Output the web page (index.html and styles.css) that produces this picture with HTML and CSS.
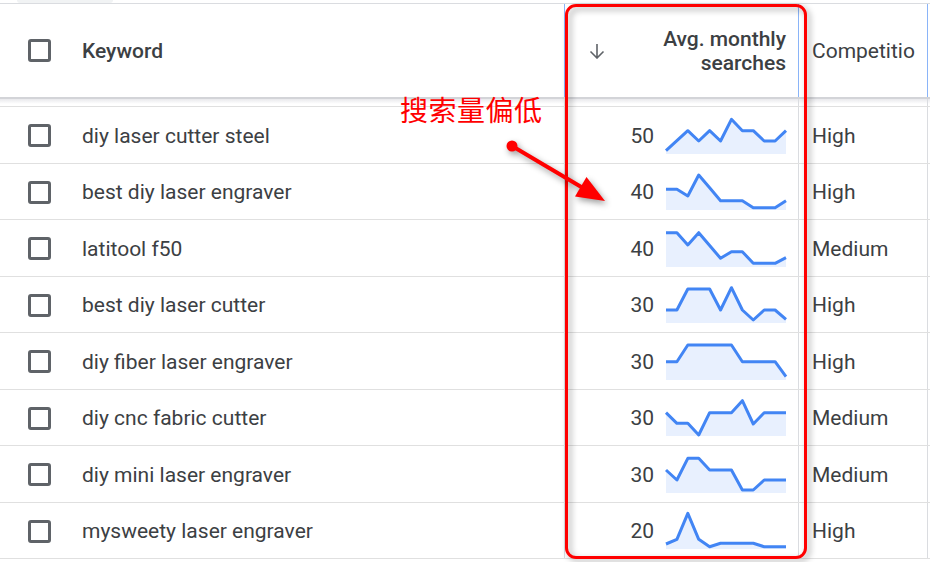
FILE: index.html
```html
<!DOCTYPE html>
<html>
<head>
<meta charset="utf-8">
<link rel="stylesheet" href="styles.css">
</head>
<body>
<div class="page">
  <div class="top-strip"><div class="tab-blob"></div></div>
  <div class="table">
    <div class="row head">
      <div class="cell kw"><span class="cb"></span><span class="hlabel">Keyword</span></div>
      <div class="cell num-h"><svg class="sort" viewBox="0 0 16 16"><path d="M8 1 V15 M1.5 8.5 L8 15 L14.5 8.5"/></svg><span class="hlabel right">Avg. monthly<br>searches</span></div>
      <div class="cell comp"><span class="comp-label">Competitio</span></div>
      <div class="cell tail"></div>
    </div>
    <div class="head-line"></div>
    <div class="row gap">
      <div class="cell"></div><div class="cell"></div><div class="cell"></div><div class="cell"></div>
    </div>

    <div class="row body">
      <div class="cell kw"><span class="cb"></span><span>diy laser cutter steel</span></div>
      <div class="cell num"><span>50</span>
        <svg class="spark" viewBox="0 0 120 36"><path class="area" d="M0,32.7 L10.91,22.7 L21.82,12.7 L32.73,23 L43.64,12.7 L54.55,23 L65.45,1.3 L76.36,12.7 L87.27,12.7 L98.18,23 L109.09,23 L120,12.7 L120,36 L0,36 Z"/><polyline class="ln" points="0,32.7 10.91,22.7 21.82,12.7 32.73,23 43.64,12.7 54.55,23 65.45,1.3 76.36,12.7 87.27,12.7 98.18,23 109.09,23 120,12.7"/></svg>
      </div>
      <div class="cell comp">High</div>
      <div class="cell tail"></div>
    </div>

    <div class="row body">
      <div class="cell kw"><span class="cb"></span><span>best diy laser engraver</span></div>
      <div class="cell num"><span>40</span>
        <svg class="spark" viewBox="0 0 120 36"><path class="area" d="M0,15.3 L10.91,15.3 L21.82,22 L32.73,1 L43.64,13.8 L54.55,26.7 L65.45,26.7 L76.36,26.7 L87.27,33.7 L98.18,33.7 L109.09,33.7 L120,26.7 L120,36 L0,36 Z"/><polyline class="ln" points="0,15.3 10.91,15.3 21.82,22 32.73,1 43.64,13.8 54.55,26.7 65.45,26.7 76.36,26.7 87.27,33.7 98.18,33.7 109.09,33.7 120,26.7"/></svg>
      </div>
      <div class="cell comp">High</div>
      <div class="cell tail"></div>
    </div>

    <div class="row body">
      <div class="cell kw"><span class="cb"></span><span>latitool f50</span></div>
      <div class="cell num"><span>40</span>
        <svg class="spark" viewBox="0 0 120 36"><path class="area" d="M0,1.7 L10.91,1.7 L21.82,14 L32.73,1.7 L43.64,14.5 L54.55,27.3 L65.45,20.7 L76.36,20.7 L87.27,32.3 L98.18,32.3 L109.09,32.3 L120,26.7 L120,36 L0,36 Z"/><polyline class="ln" points="0,1.7 10.91,1.7 21.82,14 32.73,1.7 43.64,14.5 54.55,27.3 65.45,20.7 76.36,20.7 87.27,32.3 98.18,32.3 109.09,32.3 120,26.7"/></svg>
      </div>
      <div class="cell comp">Medium</div>
      <div class="cell tail"></div>
    </div>

    <div class="row body">
      <div class="cell kw"><span class="cb"></span><span>best diy laser cutter</span></div>
      <div class="cell num"><span>30</span>
        <svg class="spark" viewBox="0 0 120 36"><path class="area" d="M0,23 L10.91,23 L21.82,2 L32.73,2 L43.64,2 L54.55,23 L65.45,0.7 L76.36,23 L87.27,33 L98.18,23 L109.09,23 L120,32.3 L120,36 L0,36 Z"/><polyline class="ln" points="0,23 10.91,23 21.82,2 32.73,2 43.64,2 54.55,23 65.45,0.7 76.36,23 87.27,33 98.18,23 109.09,23 120,32.3"/></svg>
      </div>
      <div class="cell comp">High</div>
      <div class="cell tail"></div>
    </div>

    <div class="row body">
      <div class="cell kw"><span class="cb"></span><span>diy fiber laser engraver</span></div>
      <div class="cell num"><span>30</span>
        <svg class="spark" viewBox="0 0 120 36"><path class="area" d="M0,17.7 L10.91,17.7 L21.82,1 L32.73,1 L43.64,1 L54.55,1 L65.45,1 L76.36,17.7 L87.27,17.7 L98.18,17.7 L109.09,17.7 L120,32.7 L120,36 L0,36 Z"/><polyline class="ln" points="0,17.7 10.91,17.7 21.82,1 32.73,1 43.64,1 54.55,1 65.45,1 76.36,17.7 87.27,17.7 98.18,17.7 109.09,17.7 120,32.7"/></svg>
      </div>
      <div class="cell comp">High</div>
      <div class="cell tail"></div>
    </div>

    <div class="row body">
      <div class="cell kw"><span class="cb"></span><span>diy cnc fabric cutter</span></div>
      <div class="cell num"><span>30</span>
        <svg class="spark" viewBox="0 0 120 36"><path class="area" d="M0,12.7 L10.91,23.3 L21.82,23.3 L32.73,35 L43.64,12.7 L54.55,12.7 L65.45,12.7 L76.36,0.7 L87.27,24 L98.18,12.7 L109.09,12.7 L120,12.7 L120,36 L0,36 Z"/><polyline class="ln" points="0,12.7 10.91,23.3 21.82,23.3 32.73,35 43.64,12.7 54.55,12.7 65.45,12.7 76.36,0.7 87.27,24 98.18,12.7 109.09,12.7 120,12.7"/></svg>
      </div>
      <div class="cell comp">Medium</div>
      <div class="cell tail"></div>
    </div>

    <div class="row body">
      <div class="cell kw"><span class="cb"></span><span>diy mini laser engraver</span></div>
      <div class="cell num"><span>30</span>
        <svg class="spark" viewBox="0 0 120 36"><path class="area" d="M0,13 L10.91,23 L21.82,1.3 L32.73,1.3 L43.64,13 L54.55,13 L65.45,13 L76.36,33 L87.27,33 L98.18,23 L109.09,23 L120,23 L120,36 L0,36 Z"/><polyline class="ln" points="0,13 10.91,23 21.82,1.3 32.73,1.3 43.64,13 54.55,13 65.45,13 76.36,33 87.27,33 98.18,23 109.09,23 120,23"/></svg>
      </div>
      <div class="cell comp">Medium</div>
      <div class="cell tail"></div>
    </div>

    <div class="row body">
      <div class="cell kw"><span class="cb"></span><span>mysweety laser engraver</span></div>
      <div class="cell num"><span>20</span>
        <svg class="spark" viewBox="0 0 120 36"><path class="area" d="M0,31 L10.91,26.3 L21.82,0.3 L32.73,26.3 L43.64,33.7 L54.55,30.3 L65.45,30.3 L76.36,30.3 L87.27,30.3 L98.18,33.7 L109.09,33.7 L120,33.7 L120,36 L0,36 Z"/><polyline class="ln" points="0,31 10.91,26.3 21.82,0.3 32.73,26.3 43.64,33.7 54.55,30.3 65.45,30.3 76.36,30.3 87.27,30.3 98.18,33.7 109.09,33.7 120,33.7"/></svg>
      </div>
      <div class="cell comp">High</div>
      <div class="cell tail"></div>
    </div>
  </div>

  <div class="annot-box"></div>
  <div class="annot-text">搜索量偏低</div>
  <svg class="annot-arrow" width="930" height="562" viewBox="0 0 930 562">
    <circle cx="512" cy="146" r="5.5" fill="#ff0000"/>
    <line x1="512" y1="146" x2="583" y2="188" stroke="#ff0000" stroke-width="4"/>
    <polygon points="605,201 575,196.5 586.5,177" fill="#ff0000"/>
  </svg>
</div>
</body>
</html>
```

FILE: styles.css
```css
html, body {
  margin: 0;
  padding: 0;
  background: #ffffff;
}
body {
  width: 930px;
  height: 562px;
  overflow: hidden;
  font-family: Roboto, "Liberation Sans", sans-serif;
  color: #3c4043;
}
.page {
  position: relative;
  width: 930px;
  height: 562px;
}
.top-strip {
  height: 3px;
}
.tab-blob {
  margin-left: 17px;
  width: 96px;
  height: 3px;
  background: #f1f3f4;
  border-radius: 0 0 6px 6px;
}
.table {
  border-top: 1px solid #dadce0;
}
.row {
  display: grid;
  grid-template-columns: 564px 234px 129px 1fr;
}
.cell {
  box-sizing: border-box;
  display: flex;
  align-items: center;
  min-width: 0;
  overflow: hidden;
}
.cell + .cell {
  border-left: 1px solid #dadce0;
}
.head {
  height: 93px;
  font-size: 21px;
}
.head .cell + .cell {
  border-left-color: #8ab4f8;
}
.hlabel {
  font-weight: 500;
  color: #3c4043;
  line-height: 24px;
}
.hlabel.right {
  text-align: right;
}
.kw {
  padding-left: 28px;
  gap: 31px;
  font-size: 21px;
  white-space: nowrap;
}
.cb {
  flex: none;
  box-sizing: border-box;
  width: 23px;
  height: 23px;
  border: 3px solid #5f6368;
  border-radius: 3px;
}
.num-h {
  justify-content: space-between;
  padding-left: 24px;
  padding-right: 12px;
}
.sort {
  flex: none;
  width: 16px;
  height: 16px;
  fill: none;
  stroke: #5f6368;
  stroke-width: 1.6;
}
.comp {
  padding-left: 13px;
  font-size: 21px;
  white-space: nowrap;
}
.comp-label {
  display: block;
  width: 104px;
  overflow: hidden;
}
.head-line {
  height: 2px;
  background: #d3d4d8;
}
.gap {
  box-sizing: border-box;
  height: 8px;
  border-bottom: 1px solid #e0e0e0;
  background: linear-gradient(#e9e9ec, #ffffff 70%);
}
.body {
  box-sizing: border-box;
  height: 56.5px;
  border-bottom: 1px solid #e0e0e0;
}
.body .cell {
  padding-top: 2px;
}
.num {
  justify-content: flex-end;
  gap: 12px;
  padding-right: 12px;
  font-size: 21px;
}
.spark {
  width: 120px;
  height: 36px;
  overflow: visible;
  flex: none;
}
.spark .area {
  fill: #e8f0fe;
}
.spark .ln {
  fill: none;
  stroke: #4285f4;
  stroke-width: 3;
  stroke-linejoin: round;
}
.annot-box {
  position: absolute;
  left: 565px;
  top: 4px;
  width: 242px;
  height: 555px;
  box-sizing: border-box;
  border: 3px solid #ff0000;
  border-radius: 11px;
  filter: drop-shadow(3px 3px 3px rgba(0, 0, 0, 0.35));
}
.annot-text {
  position: absolute;
  left: 400px;
  top: 95px;
  font-family: "Noto Sans CJK SC", sans-serif;
  font-size: 28px;
  line-height: 28px;
  color: #ff0000;
  letter-spacing: 0.5px;
}
.annot-arrow {
  position: absolute;
  left: 0;
  top: 0;
  pointer-events: none;
  filter: drop-shadow(2px 3px 3px rgba(0, 0, 0, 0.4));
}
```
